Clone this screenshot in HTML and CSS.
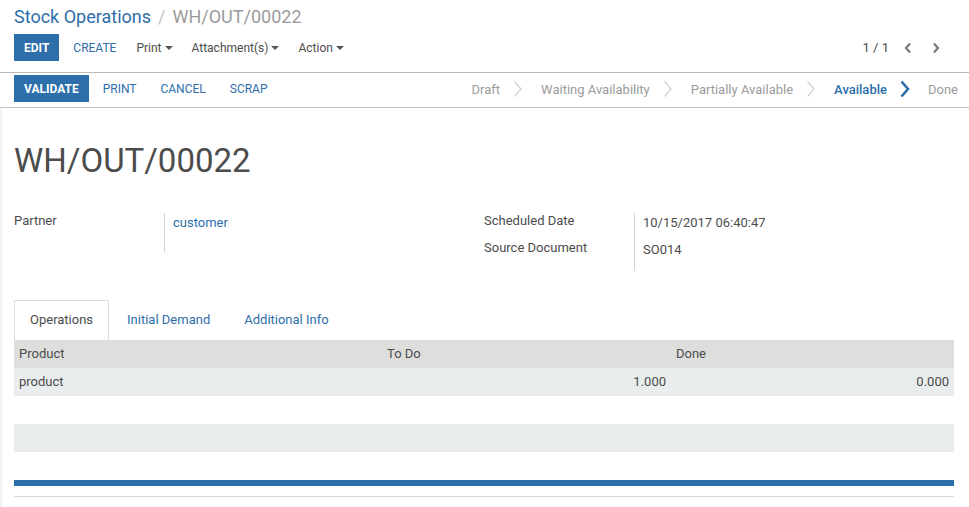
FILE: index.html
```html
<!DOCTYPE html>
<html>
<head>
<meta charset="utf-8">
<link rel="stylesheet" href="styles.css">
</head>
<body>
<div class="control-panel">
  <div class="breadcrumb">
    <a class="crumb-link">Stock Operations</a><span class="crumb-sep">/</span><span class="crumb-active">WH/OUT/00022</span>
  </div>
  <div class="cp-row">
    <div class="cp-buttons">
      <span class="btn btn-primary">EDIT</span>
      <span class="btn btn-link">CREATE</span>
      <span class="dropdown">Print<span class="caret"></span></span>
      <span class="dropdown">Attachment(s)<span class="caret"></span></span>
      <span class="dropdown">Action<span class="caret"></span></span>
    </div>
    <div class="pager">
      <span class="pager-value">1 / 1</span>
      <svg class="pager-arrow" width="8" height="12" viewBox="0 0 8 12"><polyline points="6,1.5 2,6 6,10.5" fill="none" stroke="#7a7a7a" stroke-width="2.2"/></svg>
      <svg class="pager-arrow" width="8" height="12" viewBox="0 0 8 12"><polyline points="2,1.5 6,6 2,10.5" fill="none" stroke="#7a7a7a" stroke-width="2.2"/></svg>
    </div>
  </div>
</div>
<div class="statusbar">
  <div class="sb-buttons">
    <span class="btn btn-primary">VALIDATE</span>
    <span class="btn btn-link">PRINT</span>
    <span class="btn btn-link">CANCEL</span>
    <span class="btn btn-link">SCRAP</span>
  </div>
  <div class="sb-status">
    <span class="st">Draft</span>
    <svg class="st-arrow" width="10" height="18" viewBox="0 0 10 18"><polyline points="1.5,1.5 8,9 1.5,16.5" fill="none" stroke="#d4d4d4" stroke-width="1.4"/></svg>
    <span class="st">Waiting Availability</span>
    <svg class="st-arrow" width="10" height="18" viewBox="0 0 10 18"><polyline points="1.5,1.5 8,9 1.5,16.5" fill="none" stroke="#d4d4d4" stroke-width="1.4"/></svg>
    <span class="st">Partially Available</span>
    <svg class="st-arrow" width="10" height="18" viewBox="0 0 10 18"><polyline points="1.5,1.5 8,9 1.5,16.5" fill="none" stroke="#d4d4d4" stroke-width="1.4"/></svg>
    <span class="st st-active">Available</span>
    <svg class="st-arrow" width="10" height="18" viewBox="0 0 10 18"><polyline points="1.5,1.5 8,9 1.5,16.5" fill="none" stroke="#2e6eaa" stroke-width="2.6"/></svg>
    <span class="st">Done</span>
  </div>
</div>
<div class="sheet">
  <h1 class="title">WH/OUT/00022</h1>
  <div class="groups">
    <div class="group">
      <div class="g-label">Partner</div>
      <div class="g-value g-tall"><a class="link">customer</a></div>
    </div>
    <div class="group">
      <div class="g-label">Scheduled Date</div>
      <div class="g-value">10/15/2017 06:40:47</div>
      <div class="g-label">Source Document</div>
      <div class="g-value g-last">SO014</div>
    </div>
  </div>
  <div class="tabs">
    <span class="tab tab-active">Operations</span>
    <span class="tab">Initial Demand</span>
    <span class="tab">Additional Info</span>
  </div>
  <div class="table">
    <div class="tr thead">
      <div class="td">Product</div>
      <div class="td">To Do</div>
      <div class="td">Done</div>
    </div>
    <div class="tr odd">
      <div class="td">product</div>
      <div class="td num">1.000</div>
      <div class="td num">0.000</div>
    </div>
    <div class="tr"></div>
    <div class="tr odd"></div>
    <div class="tr"></div>
  </div>
  <div class="tfoot-bar"></div>
  <div class="bottom-line"></div>
</div>
</body>
</html>
```
FILE: styles.css
```css
* { box-sizing: border-box; }
html, body { margin: 0; padding: 0; }
body {
  font-family: Roboto, "Noto Sans", sans-serif;
  font-size: 13px;
  color: #4c4c4c;
  background: #fff;
  width: 969px;
  overflow: hidden;
}
a { text-decoration: none; }

.control-panel {
  border-bottom: 1px solid #b9b9b9;
  padding: 0 14px 11px;
}
.breadcrumb {
  height: 34px;
  line-height: 34px;
  font-size: 18px;
  white-space: nowrap;
}
.crumb-link { color: #2e6eaa; }
.crumb-sep { color: #c4c4c4; margin: 0 7px 0 7px; }
.crumb-active { color: #9b9b9b; }

.cp-row {
  height: 27px;
  display: flex;
  align-items: center;
  justify-content: space-between;
}
.cp-buttons { display: flex; align-items: center; height: 27px; }
.btn {
  display: inline-flex;
  align-items: center;
  height: 27px;
  font-size: 12px;
  padding: 0 10px;
}
.btn-primary {
  background: #2e6eaa;
  color: #fff;
  font-weight: 700;
}
.btn-link { color: #2e6eaa; padding: 0 14px; }
.cp-buttons .btn-primary { padding: 0 10px; }
.dropdown {
  display: inline-flex;
  align-items: center;
  font-size: 12px;
  color: #4c4c4c;
  margin-left: 6px;
  margin-right: 13px;
}
.caret {
  display: inline-block;
  width: 0; height: 0;
  border-left: 4px solid transparent;
  border-right: 4px solid transparent;
  border-top: 4px solid #555;
  margin-left: 3px;
  margin-top: 1px;
}
.pager {
  display: flex;
  align-items: center;
  margin-right: 5px;
}
.pager-value { font-size: 13px; color: #4c4c4c; margin-right: 5px; }
.pager-arrow { margin: 0 10px; }

.statusbar {
  height: 35px;
  border-bottom: 1px solid #c4c4c4;
  padding: 2px 11px 0 14px;
  display: flex;
  justify-content: space-between;
}
.sb-buttons { display: flex; height: 27px; }
.sb-buttons .btn-primary { padding: 0 10px; }
.sb-buttons .btn-link { padding: 0 12px; }
.sb-buttons .btn-primary + .btn-link { padding-left: 14px; }
.sb-status {
  display: flex;
  align-items: center;
  height: 28px;
  font-size: 13px;
}
.st { color: #9b9b9b; }
.st-active { color: #2e6eaa; font-weight: 500; }
.st-arrow { margin: 0 18px 0 13px; }

.sheet {
  padding: 0 15px 0 14px;
  background: linear-gradient(to right, #eeeeee 0, #fafafa 2px, #fff 4px);
  height: 400px;
}
.title {
  margin: 0;
  padding-top: 33px;
  font-size: 33px;
  line-height: 40px;
  font-weight: 400;
  color: #4c4c4c;
}
.groups {
  display: grid;
  grid-template-columns: 470px 470px;
  margin-top: 32px;
}
.group {
  display: grid;
  grid-template-columns: 150px 1fr;
  align-content: start;
}
.g-label {
  height: 27px;
  line-height: 16px;
  color: #4c4c4c;
}
.g-value {
  height: 27px;
  line-height: 16px;
  padding: 2px 0 0 8px;
  border-left: 1px solid #d2d2d2;
  color: #4c4c4c;
}
.g-tall { height: 39px; }
.g-last { height: 31px; }
.link { color: #2e6eaa; }

.tabs {
  margin-top: 29px;
  display: flex;
  height: 40px;
}
.tab {
  padding: 0 15px;
  line-height: 38px;
  color: #2e6eaa;
  border: 1px solid transparent;
  border-bottom: 0;
  margin-right: 2px;
}
.tab-active {
  color: #4c4c4c;
  border-color: #dcdcdc;
  background: #fff;
  padding: 0 15px 0 15px;
}

.table { width: 940px; }
.tr {
  display: grid;
  grid-template-columns: 368px 289px 283px;
  width: 940px;
  height: 28px;
}
.thead { background: #dededc; }
.odd { background: #e9eded; }
.td {
  padding: 0 5px;
  line-height: 28px;
  white-space: nowrap;
}
.num { text-align: right; }
.tfoot-bar {
  width: 940px;
  height: 6px;
  background: #2e6eaa;
}
.bottom-line {
  width: 940px;
  height: 1px;
  background: #d9d9d9;
  margin-top: 10px;
}
```
